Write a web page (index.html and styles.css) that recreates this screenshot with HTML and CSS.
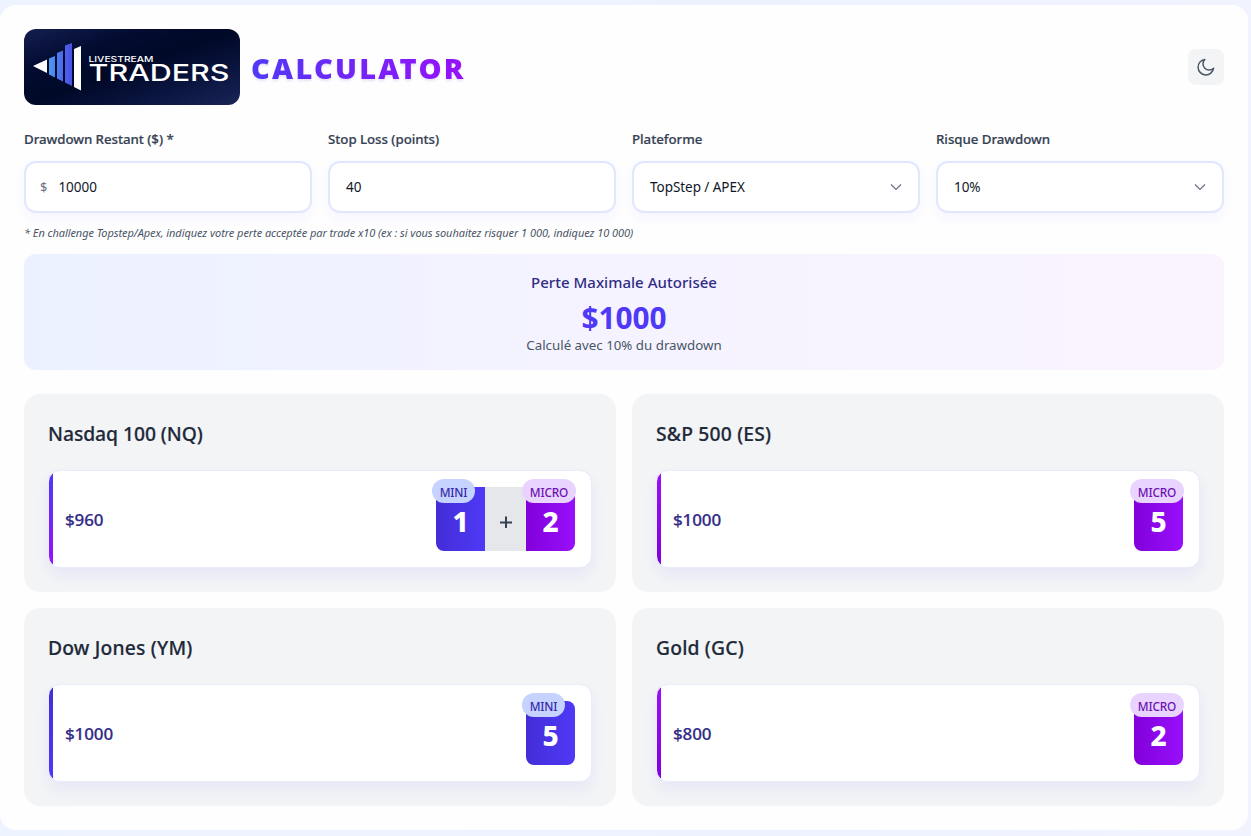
FILE: index.html
```html
<!DOCTYPE html>
<html lang="fr">
<head>
<meta charset="utf-8">
<title>Livestream Traders Calculator</title>
<link rel="stylesheet" href="styles.css">
</head>
<body>
<main class="panel">
  <header class="header">
    <div class="brand">
      <svg class="logo" viewBox="0 0 216 76" role="img">
        <defs>
          <linearGradient id="navy" x1="0" y1="0" x2="1" y2="1">
            <stop offset="0" stop-color="#131f50"/><stop offset=".28" stop-color="#030b30"/>
            <stop offset=".5" stop-color="#010928"/><stop offset=".75" stop-color="#0a1540"/><stop offset="1" stop-color="#1a2457"/>
          </linearGradient>
          <linearGradient id="bars" x1="24" y1="0" x2="48" y2="0" gradientUnits="userSpaceOnUse">
            <stop offset="0" stop-color="#4f9df0"/><stop offset=".5" stop-color="#4b72ec"/><stop offset="1" stop-color="#4d4ee6"/>
          </linearGradient>
        </defs>
        <rect width="216" height="76" fill="url(#navy)"/>
        <path fill="#fff" d="M9 37 23 30.5V44zM50 20 57 17V61.500L50 58z"/>
        <path fill="url(#bars)" d="M25 29.500 31 27V48.500L25 45.500zM33 24 39 21.500V52.500L33 49.500zM41 16.500 48 14V57L41 53.500z"/>
        <text class="logo-text" x="64.500" y="32.800" font-size="7.800" textLength="65" lengthAdjust="spacingAndGlyphs">LIVESTREAM</text>
        <text class="logo-text" x="64.500" y="52" font-size="22.500" textLength="141" lengthAdjust="spacingAndGlyphs">TRADERS</text>
      </svg>
      <h1 class="title">CALCULATOR</h1>
    </div>
    <button class="theme" aria-label="Thème">
      <svg width="20" height="20" viewBox="0 0 20 20"><path d="M17.600 11.200A7.800 7.800 0 1 1 8.800 2.400 6.200 6.200 0 0 0 17.600 11.200Z"/></svg>
    </button>
  </header>

  <section class="fields">
    <div class="field"><span class="label">Drawdown Restant ($) *</span>
      <div class="control money"><span class="unit">$</span><span class="value">10000</span></div></div>
    <div class="field"><span class="label">Stop Loss (points)</span>
      <div class="control"><span class="value">40</span></div></div>
    <div class="field"><span class="label">Plateforme</span>
      <div class="control"><span class="value">TopStep / APEX</span><svg class="chevron" viewBox="0 0 12 8"><path d="M1 1.500 6 6.500 11 1.500"/></svg></div></div>
    <div class="field"><span class="label">Risque Drawdown</span>
      <div class="control"><span class="value">10%</span><svg class="chevron" viewBox="0 0 12 8"><path d="M1 1.500 6 6.500 11 1.500"/></svg></div></div>
  </section>
  <p class="note">* En challenge Topstep/Apex, indiquez votre perte acceptée par trade x10 (ex : si vous souhaitez risquer 1 000, indiquez 10 000)</p>

  <section class="summary">
    <div class="summary-title">Perte Maximale Autorisée</div>
    <div class="summary-amount">$1000</div>
    <div class="summary-sub">Calculé avec 10% du drawdown</div>
  </section>

  <section class="cards">
    <article class="card"><h2 class="name nasdaq">Nasdaq 100 (NQ)</h2>
      <div class="row both"><span class="amount">$960</span>
        <div class="lots"><div class="lot mini"><span class="badge">MINI</span>1</div><div class="plus"><svg width="12" height="12" viewBox="0 0 12 12"><path d="M6 .5V12M0 6.500H12"/></svg></div><div class="lot micro"><span class="badge">MICRO</span>2</div></div></div></article>
    <article class="card"><h2 class="name">S&amp;P 500 (ES)</h2>
      <div class="row only-micro"><span class="amount">$1000</span>
        <div class="lots"><div class="lot micro"><span class="badge">MICRO</span>5</div></div></div></article>
    <article class="card"><h2 class="name">Dow Jones (YM)</h2>
      <div class="row only-mini"><span class="amount">$1000</span>
        <div class="lots"><div class="lot mini"><span class="badge">MINI</span>5</div></div></div></article>
    <article class="card"><h2 class="name">Gold (GC)</h2>
      <div class="row only-micro"><span class="amount">$800</span>
        <div class="lots"><div class="lot micro"><span class="badge">MICRO</span>2</div></div></div></article>
  </section>
</main>
</body>
</html>
```
FILE: styles.css
```css
* { box-sizing: border-box; }
body { margin: 0; height: 836px; overflow: hidden; padding: 5px 3px 0 0; background: linear-gradient(90deg, #eef4ff, #eef2ff 60%, #f1f4ff); font-family: "Noto Sans", "Open Sans", sans-serif; color: #1e2939; }
.panel { height: 825px; padding: 24px; border-radius: 16px; background: #fefeff; }
.header { height: 76px; display: flex; align-items: center; justify-content: space-between; }
.brand { display: flex; align-items: center; gap: 11px; }
.logo { width: 216px; height: 76px; border-radius: 12px; display: block; }
.logo-text { fill: #fff; font-family: Inter, sans-serif; font-weight: 500; }
.title { margin: 0; padding-top: 2px; font-size: 29px; line-height: 40px; font-weight: 900; letter-spacing: 2.250px; color: transparent; background: linear-gradient(90deg, #4f39f6, #9810fa); -webkit-background-clip: text; background-clip: text; filter: drop-shadow(0 2px 1px rgba(60, 30, 150, .12)); }
.theme { width: 36px; height: 36px; padding: 8px; border: 0; border-radius: 8px; background: #f3f4f6; }
.theme svg { display: block; fill: none; stroke: #4a5565; stroke-width: 1.500; stroke-linejoin: round; }
.fields { display: grid; grid-template-columns: repeat(4, 1fr); gap: 16px; margin-top: 24px; }
.label { display: block; height: 20px; line-height: 20px; font-size: 13.300px; font-weight: 500; letter-spacing: -.05px; color: #364153; -webkit-text-stroke: .2px #364153; white-space: nowrap; }
.control { height: 52px; margin-top: 12px; padding: 0 16px; border: 2px solid #e0e7ff; border-radius: 12px; background: #fff; display: flex; align-items: center; justify-content: space-between; box-shadow: 0 5px 12px rgba(79, 80, 246, .06); }
.money { justify-content: flex-start; gap: 11px; padding-left: 14px; }
.unit { font-size: 13px; color: #6a7282; }
.value { font-size: 13.500px; letter-spacing: -.05px; color: #101828; }
.chevron { width: 12px; height: 8px; fill: none; stroke: #6a7282; stroke-width: 1.200; }
.note { margin: 12px 0 0; height: 16px; line-height: 16px; font-size: 11px; letter-spacing: -.065px; font-style: italic; color: #4a5565; white-space: nowrap; }
.summary { margin-top: 13px; height: 116px; padding-top: 16px; border-radius: 12px; text-align: center; background: linear-gradient(90deg, #ebf1ff, #f5f3ff 50%, #faf4ff); }
.summary-title { font-size: 15px; line-height: 25px; font-weight: 500; letter-spacing: .03px; color: #312c85; }
.summary-amount { font-size: 29.800px; line-height: 36px; margin-top: 5px; font-weight: 700; color: #4f39f6; }
.summary-sub { font-size: 13.300px; line-height: 18px; color: #4a5565; }
.cards { display: grid; grid-template-columns: 1fr 1fr; gap: 16px; margin-top: 24px; }
.card { height: 198px; padding: 24px; border-radius: 16px; background: #f3f4f6; }
.name { margin: 0; height: 32px; line-height: 32px; font-size: 19.300px; font-weight: 500; letter-spacing: .18px; color: #1e2939; -webkit-text-stroke: .2px #1e2939; }
.nasdaq { letter-spacing: -.05px; }
.row { height: 98px; margin-top: 20px; padding: 0 16px; border: 1px solid #e8ebf8; border-radius: 12px; background: linear-gradient(var(--a), var(--b)) 0 0 / 4px 100% no-repeat, #fff; display: flex; align-items: center; justify-content: space-between; box-shadow: 0 8px 14px rgba(79, 90, 246, .07); }
.both { --a: #4f39f6; --b: #9810fa; }
.only-mini { --a: #432dd7; --b: #4f39f6; }
.only-micro { --a: #9810fa; --b: #8200db; }
.amount { padding-top: 1px; font-size: 17px; font-weight: 500; letter-spacing: -.1px; color: #312c85; -webkit-text-stroke: .2px #312c85; }
.lots { display: flex; height: 64px; }
.lot { position: relative; width: 49px; padding-top: 4px; text-align: center; line-height: 60px; font-size: 28px; font-weight: 800; color: #fff; border-radius: 8px; }
.mini { background: linear-gradient(90deg, #432dd7, #4f39f6); }
.micro { background: linear-gradient(90deg, #8200db, #9810fa); }
.both .mini { border-radius: 0 0 0 8px; }
.both .micro { border-radius: 0 0 8px 0; }
.plus { width: 41px; padding-top: 6px; background: #e5e7eb; display: flex; align-items: center; justify-content: center; }
.plus svg { fill: none; stroke: #364153; stroke-width: 2; }
.badge { position: absolute; top: -8px; left: -4px; width: 54px; height: 24px; border-radius: 12px; font-size: 11.800px; letter-spacing: -.15px; line-height: 26px; font-weight: 500; text-align: center; }
.mini .badge { width: 43px; background: #c6d2ff; color: #372aac; }
.micro .badge { background: #e9d4ff; color: #6e11b0; }
```
